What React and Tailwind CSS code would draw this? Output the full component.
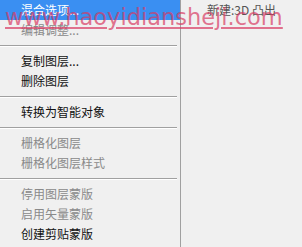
import React from 'react';

const items = [
    { label: '混合选项...', active: true },
    { label: '编辑调整...', disabled: true },
    'sep',
    { label: '复制图层...' },
    { label: '删除图层' },
    'sep',
    { label: '转换为智能对象' },
    'sep',
    { label: '栅格化图层', disabled: true },
    { label: '栅格化图层样式', disabled: true },
    'sep',
    { label: '停用图层蒙版', disabled: true },
    { label: '启用矢量蒙版', disabled: true },
    { label: '创建剪贴蒙版' },
];

const App = () => {
    return (
        <div
            className="relative w-[302px] h-[247px] overflow-hidden bg-[#f0f0f0] flex"
            style={{ fontFamily: '"Noto Sans CJK SC", "Noto Sans", sans-serif' }}
        >
            <div className="w-[181px] h-full border-r border-[#a0a0a0] bg-[#f0f0f0] shrink-0">
                {items.map((item, i) =>
                    item === 'sep' ? (
                        <div key={i} className="h-[11px] pt-[5px] pr-[3px]">
                            <div className="h-px bg-[#a0a0a0]"></div>
                            <div className="h-px bg-white"></div>
                        </div>
                    ) : (
                        <div
                            key={i}
                            className={
                                'h-[20px] pl-[21px] flex items-center text-[12px] leading-none ' +
                                (item.active
                                    ? 'bg-[#3a8ff2] text-white'
                                    : item.disabled
                                    ? 'text-[#8a8a8a]'
                                    : 'text-[#111111]')
                            }
                        >
                            {item.label}
                        </div>
                    )
                )}
            </div>

            <div className="flex-1 pl-[26px] pt-[3px]">
                <div className="text-[12px] leading-[14px] text-[#555555] whitespace-nowrap">新建:3D 凸出</div>
            </div>

            {/* watermark over the menu */}
            <div
                className="absolute left-[5px] top-[6px] text-[22.5px] leading-none text-[#d83a62]/70 underline decoration-2 underline-offset-[2px] whitespace-nowrap pointer-events-none"
                style={{ fontFamily: '"DejaVu Sans", sans-serif' }}
            >
                www.haoyidiansheji.com
            </div>
        </div>
    );
};

export default App;
